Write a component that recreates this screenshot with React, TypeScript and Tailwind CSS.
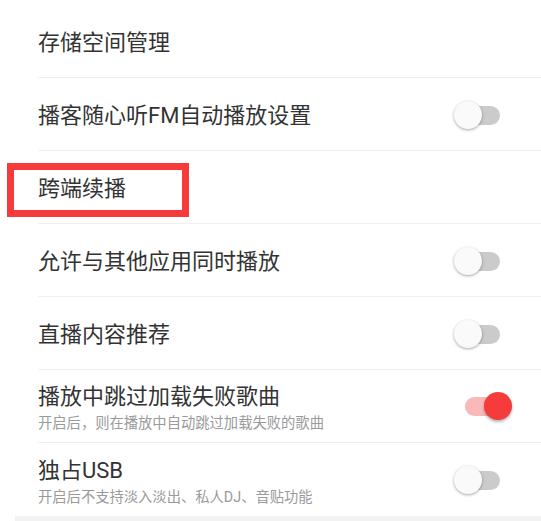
import React from "react";

function Toggle({ on }: { on: boolean }) {
  return (
    <div className="relative w-[58px] h-[28px] shrink-0">
      {on ? (
        <>
          <div className="absolute left-[11px] right-[2px] top-[5px] h-[19px] rounded-full bg-[#f9b9b9]" />
          <div className="absolute right-0 top-0 w-[28px] h-[28px] rounded-full bg-[#f53b3b] shadow-[0_2px_3px_rgba(0,0,0,0.3)]" />
        </>
      ) : (
        <>
          <div className="absolute left-[4px] right-[12px] top-[5px] h-[19px] rounded-full bg-[#cbcbcb]" />
          <div className="absolute left-0 top-0 w-[28px] h-[28px] rounded-full bg-[#fafafa] shadow-[0_1px_3px_rgba(0,0,0,0.35)]" />
        </>
      )}
    </div>
  );
}

function Row({
  title,
  sub,
  toggle,
  highlight,
  last,
}: {
  title: string;
  sub?: string;
  toggle?: "on" | "off";
  highlight?: boolean;
  last?: boolean;
}) {
  return (
    <div className="pl-[38px]">
      <div
        className={
          "relative h-[73px] flex items-center pr-[29px] " +
          (last ? "" : "border-b border-[#f0f0f0]")
        }
      >
        {highlight && (
          <div className="absolute left-[-31px] top-[12px] w-[182px] h-[54px] border-[7px] border-[#f73a3a]" />
        )}
        <div className="flex-1 flex flex-col pt-[4px]">
          <div className="text-[22px] leading-[28px] text-[#333333]">{title}</div>
          {sub && (
            <div className="text-[14.3px] leading-[20px] text-[#9a9a9a] mt-[2px]">{sub}</div>
          )}
        </div>
        {toggle && (
          <div className={sub ? "" : "mt-[2px]"}>
            <Toggle on={toggle === "on"} />
          </div>
        )}
      </div>
    </div>
  );
}

export default function App() {
  return (
    <div
      className="w-[541px] h-[521px] overflow-hidden bg-white pt-[5px]"
      style={{ fontFamily: 'Roboto, "Noto Sans CJK SC", sans-serif' }}
    >
      <Row title="存储空间管理" />
      <Row title="播客随心听FM自动播放设置" toggle="off" />
      <Row title="跨端续播" highlight />
      <Row title="允许与其他应用同时播放" toggle="off" />
      <Row title="直播内容推荐" toggle="off" />
      <Row title="播放中跳过加载失败歌曲" sub="开启后，则在播放中自动跳过加载失败的歌曲" toggle="on" />
      <Row title="独占USB" sub="开启后不支持淡入淡出、私人DJ、音贴功能" toggle="off" last />
      <div className="ml-[15px] h-[10px] bg-[#f2f2f2]" />
    </div>
  );
}
